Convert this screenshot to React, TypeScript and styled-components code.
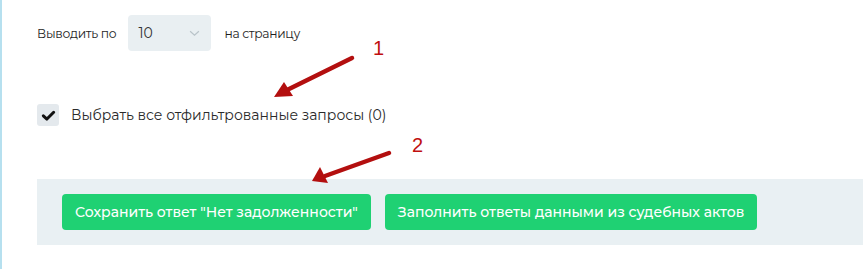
import styled, { createGlobalStyle } from 'styled-components'

const GlobalStyle = createGlobalStyle`
  html, body {
    margin: 0;
    padding: 0;
    background: #fff;
  }
  body {
    font-family: 'Montserrat', Inter, 'Noto Sans', sans-serif;
    color: #222;
  }
`

export default function App() {
  return (
    <>
      <GlobalStyle />
      <Page>
        <PerPageRow>
          <Label>Выводить по</Label>
          <Select>
            <span>10</span>
            <Chevron viewBox="0 0 12 8">
              <path d="M1 1.5 L6 6 L11 1.5" />
            </Chevron>
          </Select>
          <Label>на страницу</Label>
        </PerPageRow>

        <CheckRow>
          <CheckBox>
            <svg viewBox="0 0 16 16" width="15" height="15">
              <path d="M2.5 8.3 L6.3 11.8 L13.5 4.5" fill="none" stroke="#111" strokeWidth="3.2" strokeLinecap="round" strokeLinejoin="round" />
            </svg>
          </CheckBox>
          <CheckLabel>Выбрать все отфильтрованные запросы (0)</CheckLabel>
        </CheckRow>

        <ActionPanel>
          <GreenButton>Сохранить ответ "Нет задолженности"</GreenButton>
          <GreenButton>Заполнить ответы данными из судебных актов</GreenButton>
        </ActionPanel>

        <Marker $x={373} $y={37}>1</Marker>
        <Arrow viewBox="0 0 863 269">
          <path d="M352 58 L287 90" />
          <polygon points="274,97 284,82 293,96" />
          <path d="M389 153 L325 176" />
          <polygon points="312,181 320,167 328,183" />
        </Arrow>
        <Marker $x={412} $y={134}>2</Marker>
      </Page>
    </>
  )
}

const Page = styled.div`
  position: relative;
  height: 269px;
  border-left: 2px solid #b6e0ef;
  padding: 15px 0 0 35px;
  box-sizing: border-box;
`
const PerPageRow = styled.div`
  display: flex;
  align-items: center;
  height: 36px;
`
const Label = styled.span`
  font-size: 12.3px;
  letter-spacing: -0.3px;
  color: #1e1e1e;
`
const Select = styled.div`
  display: flex;
  align-items: center;
  justify-content: space-between;
  width: 83px;
  height: 36px;
  margin: 0 13px 0 12px;
  padding: 0 11px 0 10px;
  box-sizing: border-box;
  background: #e9eff2;
  border-radius: 4px;
  font-size: 14px;
  color: #333;
`
const Chevron = styled.svg`
  width: 11px;
  height: 7px;
  path {
    fill: none;
    stroke: #b9c3c9;
    stroke-width: 1.4;
  }
`
const CheckRow = styled.div`
  display: flex;
  align-items: center;
  gap: 12px;
  margin-top: 53px;
`
const CheckBox = styled.div`
  width: 22px;
  height: 22px;
  border-radius: 3px;
  background: #e4e9ed;
  display: flex;
  align-items: center;
  justify-content: center;
`
const CheckLabel = styled.span`
  font-size: 14px;
  color: #2a2a2a;
`
const ActionPanel = styled.div`
  display: flex;
  gap: 14px;
  margin-top: 53px;
  padding: 15px 25px;
  background: #e9f0f3;
`
const GreenButton = styled.button`
  height: 36px;
  padding: 0 13px;
  border: none;
  border-radius: 4px;
  background: #1fd173;
  color: #fff;
  font-family: inherit;
  font-size: 14px;
  font-weight: 500;
  cursor: pointer;
`
const Marker = styled.span<{ $x: number; $y: number }>`
  position: absolute;
  left: ${p => p.$x - 2}px;
  top: ${p => p.$y}px;
  font-family: 'Liberation Sans', Arial, sans-serif;
  font-size: 20px;
  color: #c00f0f;
`
const Arrow = styled.svg`
  position: absolute;
  left: -2px;
  top: 0;
  width: 863px;
  height: 269px;
  pointer-events: none;
  path {
    stroke: #b30f0f;
    stroke-width: 4.5;
    stroke-linecap: round;
    fill: none;
  }
  polygon {
    fill: #b30f0f;
  }
`
